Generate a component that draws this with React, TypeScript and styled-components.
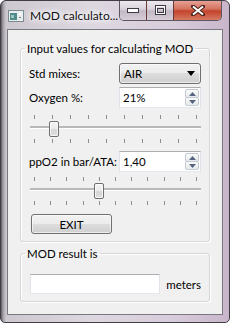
import React from "react";
import styled, { createGlobalStyle } from "styled-components";

const GlobalStyle = createGlobalStyle`
  html, body {
    margin: 0;
    padding: 0;
    background: #ffffff;
  }
  body {
    font-family: Lato, "Liberation Sans", sans-serif;
    font-size: 11.5px;
    color: #000;
  }
`;

const Window = styled.div`
  box-sizing: border-box;
  width: 230px;
  height: 323px;
  display: flex;
  flex-direction: column;
  border: 1px solid #403d44;
  border-radius: 6px 6px 5px 5px;
  background: linear-gradient(
    90deg,
    #5c5a60 0,
    #a19da5 2px,
    #cdc7d0 5px,
    #ddd7e0 40%,
    #d8cddb 75%,
    #c9b5cb 100%
  );
  overflow: hidden;
`;

const TitleBar = styled.div`
  height: 28px;
  display: flex;
  align-items: flex-start;
  flex-shrink: 0;
`;

const AppIcon = styled.svg`
  margin: 9px 0 0 7px;
  flex-shrink: 0;
`;

const Title = styled.span`
  margin: 7px 0 0 6px;
  font-size: 12px;
  line-height: 16px;
  color: #111;
  white-space: nowrap;
  text-shadow: 0 0 8px #fff, 0 0 6px #fff, 0 0 4px #fff;
`;

const CaptionButtons = styled.div`
  margin: -1px 7px 0 auto;
  display: flex;
  height: 20px;
  border: 1px solid #5b5660;
  border-top: none;
  border-radius: 0 0 5px 5px;
  overflow: hidden;
`;

const CaptionButton = styled.div<{ $close?: boolean }>`
  width: ${({ $close }) => ($close ? "47px" : "26px")};
  display: flex;
  align-items: center;
  justify-content: center;
  & + & {
    border-left: 1px solid ${({ $close }) => ($close ? "#6b3a36" : "#8d8794")};
  }
  background: ${({ $close }) =>
    $close
      ? "linear-gradient(#e8a79b 0%, #d4735f 45%, #c2432c 55%, #d77a62 100%)"
      : "linear-gradient(#efeaf0 0%, #d9d2dc 45%, #c3b9c6 55%, #d6cdd8 100%)"};
`;

const Client = styled.div`
  flex: 1;
  margin: 0 6px 7px;
  border: 1px solid #7b7882;
  background: #f0f0f0;
  padding: 0 12px;
  display: flex;
  flex-direction: column;
`;

const GroupBox = styled.fieldset<{ $top: number; $bottom: number }>`
  margin: ${({ $top }) => $top}px 0 0;
  padding: 7px 8px ${({ $bottom }) => $bottom}px;
  border: 1px solid #d5d5d5;
  border-radius: 3px;
  box-shadow: inset 1px 1px 0 #fff, 1px 1px 0 #fff;
  min-width: 0;
`;

const GroupTitle = styled.legend`
  margin-left: -4px;
  padding: 0 2px;
  line-height: 15px;
  white-space: nowrap;
`;

const FormRow = styled.div<{ $mt?: number }>`
  display: grid;
  grid-template-columns: 90px 82px;
  align-items: center;
  margin-top: ${({ $mt }) => $mt ?? 0}px;
`;

const Label = styled.span`
  white-space: nowrap;
`;

const ComboBox = styled.div`
  box-sizing: border-box;
  height: 21px;
  border: 1px solid #707070;
  border-radius: 3px;
  background: linear-gradient(#f2f2f2 0%, #ebebeb 50%, #dddddd 50%, #cfcfcf 100%);
  box-shadow: inset 0 0 0 1px rgba(255, 255, 255, 0.6);
  display: flex;
  align-items: center;
  justify-content: space-between;
  padding: 0 5px 0 4px;
`;

const SpinBox = styled.div`
  box-sizing: border-box;
  height: 21px;
  display: flex;
  background: #fff;
  border: 1px solid #e2e3ea;
  border-top-color: #abadb3;
  border-bottom-color: #e3e9ef;
`;

const SpinText = styled.span`
  flex: 1;
  padding-left: 3px;
  line-height: 19px;
`;

const SpinButtons = styled.div`
  width: 14px;
  display: flex;
  flex-direction: column;
  margin: 1px 1px 1px 0;
`;

const SpinButton = styled.div`
  flex: 1;
  display: flex;
  align-items: center;
  justify-content: center;
  border: 1px solid #c5cbd3;
  border-radius: 2px;
  background: linear-gradient(#fbfbfb, #e6e8ec);
  & + & {
    margin-top: -1px;
  }
`;

const SliderBox = styled.div<{ $mt?: number }>`
  position: relative;
  height: 34px;
  margin-top: ${({ $mt }) => $mt ?? 0}px;
`;

const TickRow = styled.div<{ $top: number }>`
  position: absolute;
  left: 0;
  right: 0;
  top: ${({ $top }) => $top}px;
  display: flex;
  justify-content: space-between;
  padding: 0 4px 0 5px;
`;

const Tick = styled.span`
  width: 1px;
  height: 4px;
  background: #8e8e8e;
`;

const Groove = styled.div`
  position: absolute;
  left: 1px;
  right: 0;
  top: 16px;
  height: 2px;
  background: #b9b9b9;
  border-bottom: 1px solid #fff;
`;

const Handle = styled.div`
  position: absolute;
  top: 11px;
  box-sizing: border-box;
  width: 10px;
  height: 16px;
  border: 1px solid #6f6f6f;
  border-radius: 2px;
  background: linear-gradient(#f4f4f4 0%, #ececec 45%, #d6d6d6 55%, #dedede 100%);
  box-shadow: inset 0 0 0 1px rgba(255, 255, 255, 0.7);
`;

const PushButton = styled.div`
  box-sizing: border-box;
  width: 81px;
  height: 20px;
  margin: 8px 0 0 2px;
  border: 1px solid #707070;
  border-radius: 3px;
  background: linear-gradient(#f2f2f2 0%, #ebebeb 50%, #dddddd 50%, #cfcfcf 100%);
  box-shadow: inset 0 0 0 1px rgba(255, 255, 255, 0.6);
  display: flex;
  align-items: center;
  justify-content: center;
`;

const ResultRow = styled.div`
  display: flex;
  align-items: center;
  margin-top: 6px;
`;

const TextField = styled.div`
  box-sizing: border-box;
  width: 132px;
  height: 20px;
  margin-left: 1px;
  background: #fff;
  border: 1px solid #e2e3ea;
  border-top-color: #abadb3;
  border-bottom-color: #e3e9ef;
`;

const Unit = styled.span`
  margin-left: 6px;
`;

const DropArrow = () => (
  <svg width="8" height="5" viewBox="0 0 8 5">
    <path d="M0 0H8L4 5Z" fill="#000" />
  </svg>
);

const SpinArrow: React.FC<{ up?: boolean }> = ({ up }) => (
  <svg width="7" height="4" viewBox="0 0 7 4">
    <path d={up ? "M0 4H7L3.5 0Z" : "M0 0H7L3.5 4Z"} fill="#55657e" />
  </svg>
);

const Spin: React.FC<{ value: string }> = ({ value }) => (
  <SpinBox>
    <SpinText>{value}</SpinText>
    <SpinButtons>
      <SpinButton>
        <SpinArrow up />
      </SpinButton>
      <SpinButton>
        <SpinArrow />
      </SpinButton>
    </SpinButtons>
  </SpinBox>
);

type SliderProps = {
  value: number;
  min: number;
  max: number;
  ticks: number;
  mt?: number;
};

const Slider: React.FC<SliderProps> = ({ value, min, max, ticks, mt }) => {
  const left = ((value - min) / (max - min)) * 162;
  const marks = Array.from({ length: ticks }, (_, i) => <Tick key={i} />);
  return (
    <SliderBox $mt={mt}>
      <TickRow $top={5}>{marks}</TickRow>
      <Groove />
      <Handle style={{ left }} />
      <TickRow $top={29}>{marks}</TickRow>
    </SliderBox>
  );
};

export default function App() {
  return (
    <>
      <GlobalStyle />
      <Window>
        <TitleBar>
          <AppIcon width="16" height="12" viewBox="0 0 16 12">
            <rect x="0.5" y="0.5" width="15" height="11" fill="#e8eef0" stroke="#7d8a90" />
            <rect x="2" y="3" width="7" height="7" fill="#4f8b8a" />
            <rect x="3" y="5" width="3" height="3" fill="#9cc7c2" />
            <rect x="11" y="3" width="2" height="2" fill="#ffffff" />
            <rect x="11" y="7" width="2" height="1" fill="#6d7d84" />
          </AppIcon>
          <Title>MOD calculato...</Title>
          <CaptionButtons>
            <CaptionButton>
              <svg width="12" height="5" viewBox="0 0 12 5">
                <rect x="0.5" y="0.5" width="11" height="4" fill="#fff" stroke="#3c3a42" />
              </svg>
            </CaptionButton>
            <CaptionButton>
              <svg width="11" height="10" viewBox="0 0 11 10">
                <rect x="0.5" y="0.5" width="10" height="9" fill="none" stroke="#3c3a42" />
                <rect x="1.5" y="1.5" width="8" height="7" fill="none" stroke="#fff" />
                <rect x="2.5" y="3.5" width="6" height="4" fill="none" stroke="#3c3a42" />
              </svg>
            </CaptionButton>
            <CaptionButton $close>
              <svg width="14" height="11" viewBox="0 0 14 11">
                <path
                  d="M2 1.5L12 9.5M12 1.5L2 9.5"
                  stroke="#4a2420"
                  strokeWidth="4"
                  strokeLinecap="round"
                />
                <path d="M2 1.5L12 9.5M12 1.5L2 9.5" stroke="#fff" strokeWidth="2" />
              </svg>
            </CaptionButton>
          </CaptionButtons>
        </TitleBar>
        <Client>
          <GroupBox $top={11} $bottom={7}>
            <GroupTitle>Input values for calculating MOD</GroupTitle>
            <FormRow>
              <Label>Std mixes:</Label>
              <ComboBox>
                <span>AIR</span>
                <DropArrow />
              </ComboBox>
            </FormRow>
            <FormRow $mt={3}>
              <Label>Oxygen %:</Label>
              <Spin value="21%" />
            </FormRow>
            <Slider value={21} min={18} max={42} ticks={10} mt={2} />
            <FormRow $mt={7}>
              <Label>ppO2 in bar/ATA:</Label>
              <Spin value="1,40" />
            </FormRow>
            <Slider value={1.4} min={1} max={2} ticks={11} />
            <PushButton>EXIT</PushButton>
          </GroupBox>
          <GroupBox $top={4} $bottom={7}>
            <GroupTitle>MOD result is</GroupTitle>
            <ResultRow>
              <TextField />
              <Unit>meters</Unit>
            </ResultRow>
          </GroupBox>
        </Client>
      </Window>
    </>
  );
}
